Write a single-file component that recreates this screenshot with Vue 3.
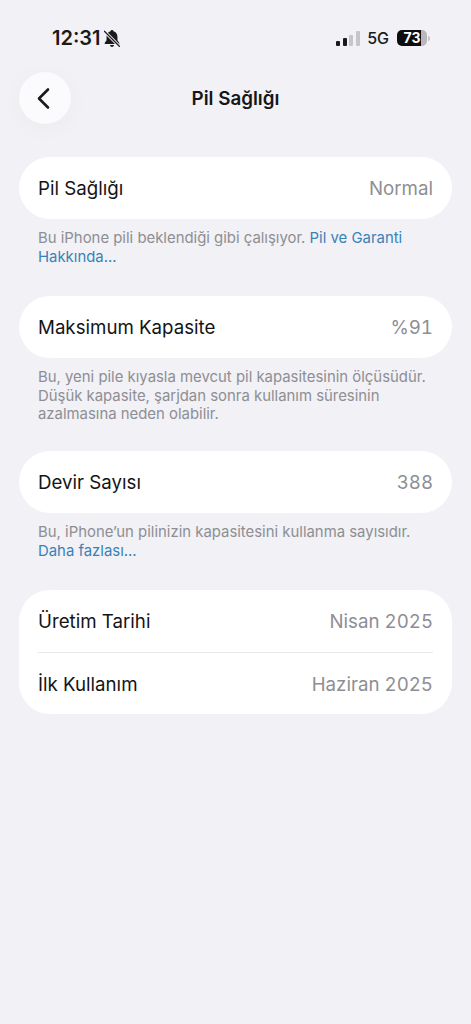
<script setup>
const sections = [
  { rows: [{ label: 'Pil Sağlığı', value: 'Normal' }], note: 'Bu iPhone pili beklendiği gibi çalışıyor. ', link: 'Pil ve Garanti Hakkında...' },
  { tight: true, rows: [{ label: 'Maksimum Kapasite', value: '%91' }], note: 'Bu, yeni pile kıyasla mevcut pil kapasitesinin ölçüsüdür. Düşük kapasite, şarjdan sonra kullanım süresinin azalmasına neden olabilir.' },
  { rows: [{ label: 'Devir Sayısı', value: '388' }], note: 'Bu, iPhone’un pilinizin kapasitesini kullanma sayısıdır. ', link: 'Daha fazlası...' },
  { rows: [{ label: 'Üretim Tarihi', value: 'Nisan 2025' }, { label: 'İlk Kullanım', value: 'Haziran 2025' }] }
]
</script>

<template>
  <div class="screen">
    <div class="status">
      <div class="status-left">
        <span class="time">12:31</span>
        <svg class="bell" width="16" height="17" viewBox="2 1.2 13 14">
          <path d="M8.5 1.2c-.7 0-1.2.5-1.2 1.1C5.2 2.9 4 4.6 4 7v2.6L2.5 12v.8h12V12L13 9.6V7c0-2.4-1.2-4.1-3.3-4.7 0-.6-.5-1.1-1.2-1.1zM6.8 13.6c.2.9.9 1.6 1.7 1.6s1.5-.7 1.7-1.6z" fill="#1a1a1c"/>
          <path d="M2 2l13 13" stroke="#f1f1f6" stroke-width="2.6"/>
          <path d="M2 2l13 13" stroke="#1a1a1c" stroke-width="1.1"/>
        </svg>
      </div>
      <div class="status-right">
        <div class="signal"><i class="b1"></i><i class="b2"></i><i class="b3"></i><i class="b4"></i></div>
        <span class="net">5G</span>
        <div class="battery">73</div>
        <div class="battery-tip"></div>
      </div>
    </div>

    <div class="nav">
      <button class="back" aria-label="Geri">
        <svg width="18" height="26" viewBox="0 0 18 26"><path d="M12 4.5 3 13.5l9 9" fill="none" stroke="#1a1a1c" stroke-width="2.6" stroke-linecap="round" stroke-linejoin="round"/></svg>
      </button>
      <h1>Pil Sağlığı</h1>
    </div>

    <section v-for="(s, i) in sections" :key="i" class="section" :class="{ tight: s.tight }">
      <div class="card">
        <template v-for="(r, j) in s.rows" :key="j">
          <div v-if="j" class="sep"></div>
          <div class="row"><span>{{ r.label }}</span><span class="value">{{ r.value }}</span></div>
        </template>
      </div>
      <p v-if="s.note" class="note">{{ s.note }}<a v-if="s.link">{{ s.link }}</a></p>
    </section>
  </div>
</template>

<style scoped>
.screen { width: 471px; height: 1024px; background: #f1f1f6; font-family: Inter, "Liberation Sans", sans-serif; color: #111; overflow: hidden; box-sizing: border-box; }
.status { height: 72px; padding: 28px 41px 0 52px; box-sizing: border-box; display: flex; justify-content: space-between; align-items: flex-start; }
.status-left { display: flex; align-items: center; gap: 4px; height: 20px; }
.time { font-size: 20px; font-weight: 600; color: #1a1a1c; }
.status-right { display: flex; align-items: center; height: 20px; }
.signal { display: flex; align-items: flex-end; gap: 2.5px; height: 15px; margin-right: 7.5px; }
.signal i { width: 4px; border-radius: 1px; background: #1a1a1c; display: block; }
.signal .b1 { height: 5px; } .signal .b2 { height: 8px; } .signal .b3 { height: 11px; background: #c6c6ca; } .signal .b4 { height: 15px; background: #c6c6ca; }
.net { font-size: 16px; font-weight: 500; color: #1a1a1c; margin-right: 8px; }
.battery { width: 30px; height: 16px; border-radius: 5px; background: linear-gradient(90deg, #0d0d0f 24px, #b8b8bc 24px); color: #fff; font-size: 14px; font-weight: 700; line-height: 16px; text-align: center; }
.battery-tip { width: 2px; height: 5px; background: #c4c4c8; margin-left: 1px; border-radius: 0 2px 2px 0; }
.nav { position: relative; height: 52px; display: flex; align-items: center; justify-content: center; margin-bottom: 33px; }
.nav h1 { margin: 0; font-size: 18.8px; font-weight: 600; color: #16161a; }
.back { position: absolute; left: 19px; top: 0; width: 52px; height: 52px; border-radius: 50%; border: 0; padding: 0; background: #fbfbfd; box-shadow: 0 4px 24px rgba(0,0,0,.03); display: flex; align-items: center; justify-content: center; }
.section { margin: 0 19px 29.6px; }
.section.tight { margin-bottom: 26.9px; }
.card { background: #fff; border-radius: 31px; padding: 0 19px; }
.row { height: 61.5px; padding-top: 1.5px; box-sizing: border-box; display: flex; align-items: center; justify-content: space-between; font-size: 18.7px; color: #141416; }
.value { color: #8e8e93; font-variant-numeric: tabular-nums; }
.sep { height: 1px; background: #e8e8ea; }
.note { margin: 10.5px 19px 0; font-size: 14.9px; line-height: 18.7px; color: #8e8e93; }
.note a { color: #3a82b5; }
</style>
